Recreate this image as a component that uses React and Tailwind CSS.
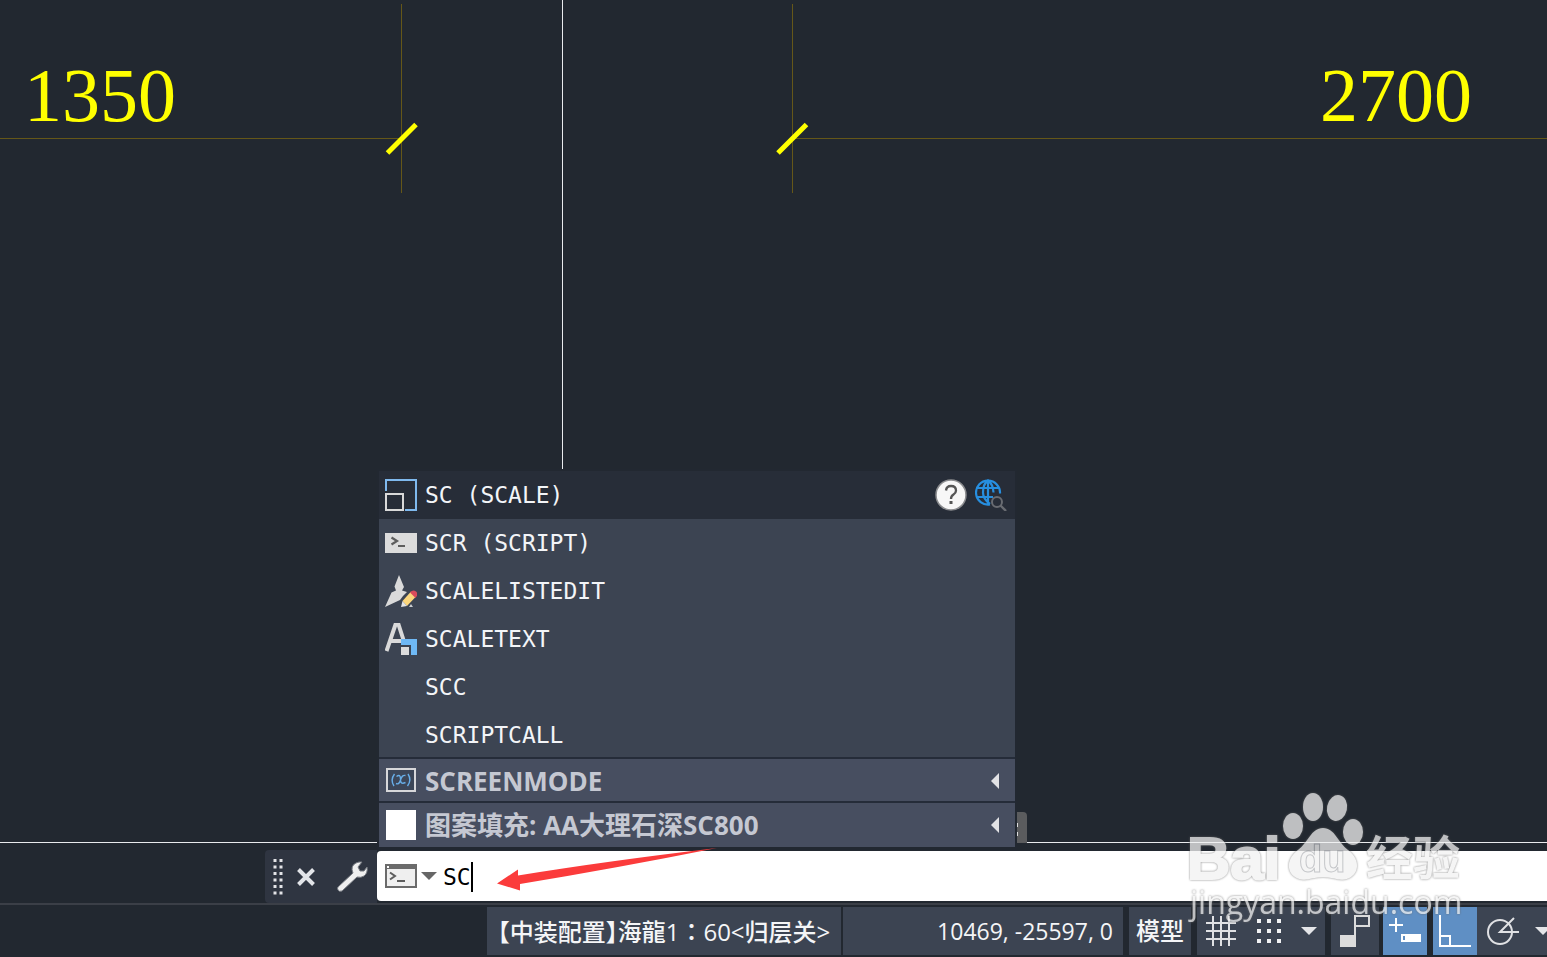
import React, { useState } from "react";

function ScaleIcon() {
  return (
    <svg width="32" height="32" viewBox="0 0 32 32" fill="none" strokeWidth="2">
      <path d="M1 12V1H31V31H20" stroke="#7fb9ee" />
      <rect x="1" y="15" width="17" height="16" stroke="#d9d9d9" />
    </svg>
  );
}

function ScriptIcon() {
  return (
    <svg width="32" height="32" viewBox="0 0 32 32" fill="none">
      <rect y="6" width="32" height="20" fill="#dcdcdc" />
      <path d="M6.500 10.500L12 14L6.500 17.500" stroke="#5d5d5d" strokeWidth="2.200" />
      <path d="M13 19H20" stroke="#5d5d5d" strokeWidth="2" />
    </svg>
  );
}

function ScaleListIcon() {
  return (
    <svg width="32" height="32" viewBox="0 0 32 32" fill="none">
      <path d="M14 0L9.500 11.500L11 15.500L6.500 17.500L0 32L15 25L18 21L22 17L17 15.500L19 12Z" fill="#dadada" />
      <path d="M17.500 26L26 16.500L31 21.500L22 31Z" fill="#fbd67c" />
      <path d="M25 17.500Q28 14 31 16.500Q34 19 30.500 23Z" fill="#d94c5c" />
      <path d="M17.500 26L22 31L16 32Z" fill="#e4e4e4" />
      <path d="M26 29L28 32H24Z" fill="#c9ccd0" />
    </svg>
  );
}

function ScaleTextIcon() {
  return (
    <svg width="32" height="32" viewBox="0 0 32 32" fill="none">
      <path d="M1.500 28L10.500 1.500H13.500L18.500 17M5.500 18H17" stroke="#dadada" strokeWidth="4" />
      <path d="M16 16H32V32H26V22H16Z" fill="#6fb9f5" />
      <rect x="16" y="24" width="8" height="8" fill="#dcdcdc" />
    </svg>
  );
}

function VariableIcon() {
  return (
    <svg width="32" height="32" viewBox="0 0 32 32" fill="none">
      <rect x="2" y="4" width="28" height="22" fill="#3c4658" stroke="#d7d7da" strokeWidth="2" />
      <g stroke="#68aee8" strokeWidth="1.400">
        <path d="M9.500 9Q5 15 9 21M23 9Q27 15 22.500 21" />
        <path d="M11.500 11.500Q15.500 8.500 15.500 14Q15 20 20.500 17.500M20.500 10.500Q17 9.500 15.500 15Q14 20 11 18.500" />
      </g>
    </svg>
  );
}

function HelpIcon() {
  return (
    <svg width="32" height="32" viewBox="0 0 32 32" fill="none">
      <circle cx="16" cy="16" r="15" fill="#f7f7f7" stroke="#8b8c8f" strokeWidth="1.500" />
      <path d="M11 11.500Q11.500 7 16 7Q21 7 21 11.500Q21 14 18.500 15.500Q16 17 16 20" stroke="#555" strokeWidth="2.300" />
      <rect x="14.500" y="22" width="3" height="3" fill="#555" />
    </svg>
  );
}

function GlobeSearchIcon() {
  return (
    <svg width="32" height="32" viewBox="0 0 32 32" fill="none">
      <g stroke="#278fe0" strokeWidth="2.200">
        <path d="M15 25.500A12 12 0 1 1 25 14.500" />
        <path d="M15 25Q8 20 8 13.500Q8 5 13 1.500Q18 5 18.500 13.500M13 1V26M2 9H24M1 18H18" />
      </g>
      <circle cx="22" cy="23" r="5" stroke="#696c72" strokeWidth="2" fill="#272d38" />
      <path d="M25.500 26.500L31 32" stroke="#696c72" strokeWidth="2.400" />
    </svg>
  );
}

const commands = [
  { name: "SC (SCALE)", Icon: ScaleIcon, selected: true },
  { name: "SCR (SCRIPT)", Icon: ScriptIcon },
  { name: "SCALELISTEDIT", Icon: ScaleListIcon },
  { name: "SCALETEXT", Icon: ScaleTextIcon },
  { name: "SCC" },
  { name: "SCRIPTCALL" },
];

function CommandRow({ name, Icon, selected }) {
  return (
    <li className={selected ? "flex h-12 items-center bg-[#272d38] pr-2" : "flex h-12 items-center bg-[#3c4452] pr-2"}>
      <button className="flex h-full flex-1 items-center gap-2 pl-1.5 text-left">
        <span className="size-8">{Icon && <Icon />}</span>
        <span className="whitespace-pre">{name}</span>
      </button>
      {selected && (
        <span className="flex gap-2">
          <button aria-label="Help"><HelpIcon /></button>
          <button aria-label="Search online"><GlobeSearchIcon /></button>
        </span>
      )}
    </li>
  );
}

function CategoryRow({ children, icon }) {
  return (
    <button className="flex h-11 w-full items-center gap-2 bg-[#474e60] pr-4 pl-1.5 text-left font-['Open_Sans','Noto_Sans_CJK_SC',sans-serif] text-[26px] leading-8 font-bold text-[#c5c8d2]">
      <span className="flex size-8 items-center justify-center">{icon}</span>
      <span className="flex-1 whitespace-nowrap">{children}</span>
      <svg width="8" height="16" viewBox="0 0 8 16"><path d="M8 0V16L0 8Z" fill="#e2e2e5" /></svg>
    </button>
  );
}

function Suggestions() {
  return (
    <section aria-label="Suggestions" className="absolute bottom-0 left-[377px] w-[640px] border-2 border-b-[3px] border-[#222831] font-['DejaVu_Sans_Mono',monospace] text-[23px] text-[#f3f5f8]">
      <ul className="h-[288px] overflow-hidden border-b-2 border-[#252c39]">
        {commands.map((c) => <CommandRow key={c.name} {...c} />)}
      </ul>
      <div className="h-11 overflow-hidden border-b-2 border-[#252c39]">
        <CategoryRow icon={<VariableIcon />}>SCREENMODE</CategoryRow>
      </div>
      <CategoryRow icon={<span className="size-[30px] bg-white" />}>图案填充: AA大理石深SC800</CategoryRow>
    </section>
  );
}

function Drawing() {
  return (
    <svg className="absolute inset-0 size-full" fill="none">
      <g stroke="#655718" strokeWidth="1">
        <path d="M0 138.500H402M401.500 4V193M792.500 4V193" />
        <path d="M793 138.500H4000" />
      </g>
      <path d="M387.500 153L416 124.500M778 153L806.500 124.500" stroke="#ffff00" strokeWidth="5" />
      <path d="M562.500 0V842M0 842.500H4000" stroke="#e9ebee" strokeWidth="1" />
      <g fill="#ffff00" className="font-['Liberation_Serif',serif] text-[76px]">
        <text x="24" y="121">1350</text>
        <text x="1320" y="121">2700</text>
      </g>
      <path d="M1017 812H1023Q1027 812 1027 816V843H1017Z" fill="#5b5c5e" />
      <path d="M1017 823h1v4h-1zM1017 832h1v4h-1z" fill="#ddd" />
    </svg>
  );
}

function CommandLine() {
  const [value, setValue] = useState("SC");
  return (
    <div className="relative flex h-[53px] items-stretch pl-[265px]">
      <div className="flex w-28 items-center rounded-l bg-[#2f3541]">
        <svg width="12" height="36" viewBox="0 0 12 36" className="ml-2" aria-hidden="true">
          <path d="M2 0V36M8 0V36" stroke="#e3e4e7" strokeWidth="3" strokeDasharray="3 3.500" />
        </svg>
        <button aria-label="Close" className="ml-3">
          <svg width="18" height="18" viewBox="0 0 18 18"><path d="M1.500 1.500L16.500 16.500M16.500 1.500L1.500 16.500" stroke="#e2e4e8" strokeWidth="4" /></svg>
        </button>
        <button aria-label="Customize" className="ml-5">
          <svg width="34" height="34" viewBox="0 0 34 34">
            <path d="M3 27L18 13Q15 6 21 3Q24 1.500 27 2L23 7L25 11L29 11L32 7Q33 13 29 16Q26 18 22 17L7 31Q4 32 3 30Q2 28 3 27Z" fill="#efefef" stroke="#777b82" strokeWidth="1" />
          </svg>
        </button>
      </div>
      <div className="my-px mb-0.5 flex flex-1 items-center rounded-l bg-white pl-2">
        <button aria-label="Recent commands" className="flex items-center gap-1">
          <svg width="32" height="24" viewBox="0 0 32 24" fill="none">
            <rect x="1" y="1" width="30" height="22" fill="#efefef" stroke="#6b6b6b" strokeWidth="2" />
            <path d="M0 0H32V5H0Z" fill="#6b6b6b" />
            <path d="M2 2h2v2h-2z" fill="#fff" />
            <path d="M5 8.500L10 12L5 15.500M12 17H20" stroke="#5d5d5d" strokeWidth="2" />
          </svg>
          <svg width="16" height="8" viewBox="0 0 16 8"><path d="M0 0H16L8 8Z" fill="#666" /></svg>
        </button>
        <div className="relative ml-1.5 flex-1 pt-0.5">
          <input
            aria-label="Command"
            value={value}
            onChange={(e) => setValue(e.target.value)}
            className="w-full bg-transparent font-['DejaVu_Sans_Mono',monospace] text-[23px] text-black outline-none"
          />
          <span className="absolute top-1 left-7 h-[30px] w-0.5 bg-black" />
        </div>
      </div>
      <svg className="pointer-events-none absolute -top-1 left-[497px]" width="220" height="46" viewBox="0 0 220 46">
        <path d="M0 37.500L21 23.500V29.500Q110 15 220 2Q120 22 23 38V44.500Z" fill="#fb3b3b" />
      </svg>
    </div>
  );
}

const iconCell = "flex h-12 items-center justify-center";

function StatusBar() {
  return (
    <footer className="flex h-[54px] items-start justify-end overflow-hidden border-t-2 border-[#3b3f47] pt-0.5 font-['Open_Sans','Noto_Sans_CJK_SC',sans-serif] text-[23px] font-medium whitespace-nowrap text-[#f4f5f7]">
      <button className="mr-0.5 flex h-12 w-[354px] items-center justify-center bg-[#3c4452] text-2xl">
        <span>
          <span className="[font-feature-settings:'halt']">【中装配置】</span>海龍1<span className="font-['Noto_Sans_CJK_TC',sans-serif]">：</span>60&lt;归层关&gt;
        </span>
      </button>
      <button className="mr-1.5 flex h-12 w-[280px] items-center justify-end bg-[#3c4452] pr-2.5">10469, -25597, 0</button>
      <button className="mr-1.5 flex h-12 w-[62px] items-center justify-center bg-[#3c4452] text-2xl">模型</button>
      <div className="mr-1.5 flex h-12 w-32 items-center bg-[#3c4452] pl-2">
        <button aria-label="Grid">
          <svg width="32" height="32" viewBox="0 0 32 32"><path d="M8 1V31M16 1V31M24 1V31M1 8H31M1 16H31M1 24H31" stroke="#e0e1e4" strokeWidth="2" /></svg>
        </button>
        <button aria-label="Snap" className="ml-4">
          <svg width="32" height="32" viewBox="0 0 32 32"><path d="M4 6H28M4 16H28M4 26H28" stroke="#f0f1f3" strokeWidth="4" strokeDasharray="4 6" /></svg>
        </button>
        <button aria-label="Snap options" className="ml-4">
          <svg width="16" height="8" viewBox="0 0 16 8"><path d="M0 0H16L8 8Z" fill="#e4e5e8" /></svg>
        </button>
      </div>
      <button aria-label="Infer constraints" className={`${iconCell} mr-1 w-12 bg-[#3c4452]`}>
        <svg width="32" height="32" viewBox="0 0 32 32" fill="none"><rect x="1" y="20" width="16" height="12" fill="#dcdcdc" /><path d="M16 20V1H30V11H16" stroke="#dcdcdc" strokeWidth="2" /></svg>
      </button>
      <button aria-label="Dynamic input" className={`${iconCell} mr-1.5 w-11 bg-[#5f8fc4]`}>
        <svg width="32" height="32" viewBox="0 0 32 32" fill="none"><path d="M7 3V17M0 10H14" stroke="#fff" strokeWidth="2" /><rect x="12" y="19" width="20" height="8" fill="#fff" /><path d="M14 21h2v4h-2z" fill="#5f8fc4" /></svg>
      </button>
      <button aria-label="Ortho mode" className={`${iconCell} w-11 bg-[#5f8fc4]`}>
        <svg width="32" height="32" viewBox="0 0 32 32" fill="none"><path d="M1 0V31H32M1 21H11V31" stroke="#fff" strokeWidth="2" /></svg>
      </button>
      <div className="flex h-12 w-[70px] items-center overflow-hidden bg-[#3c4452] pl-2.5">
        <button aria-label="Polar tracking" className="shrink-0">
          <svg width="32" height="32" viewBox="0 0 32 32" fill="none" stroke="#e0e1e4" strokeWidth="2"><circle cx="13" cy="17" r="12" /><path d="M27 3L13 17H32" /></svg>
        </button>
        <button aria-label="Polar options" className="ml-4 shrink-0">
          <svg width="16" height="8" viewBox="0 0 16 8"><path d="M0 0H16L8 8Z" fill="#e4e5e8" /></svg>
        </button>
      </div>
    </footer>
  );
}

function Watermark() {
  return (
    <svg className="pointer-events-none absolute right-[77px] bottom-[31px] opacity-75 drop-shadow-[0_0_1px_#666666]" width="290" height="140" viewBox="1180 786 290 140" fill="#f2f2f2">
      <g className="font-['Liberation_Sans','Noto_Sans_CJK_SC',sans-serif] font-bold">
        <text x="1187" y="879" className="text-[60px]" stroke="#f2f2f2" strokeWidth="2">Bai</text>
        <text x="1366" y="875" className="text-[47px]">经验</text>
      </g>
      <ellipse cx="1293" cy="826" rx="10" ry="13" />
      <ellipse cx="1313" cy="807" rx="10" ry="14" />
      <ellipse cx="1337" cy="808" rx="10" ry="13" transform="rotate(12 1337 808)" />
      <ellipse cx="1353" cy="832" rx="10" ry="13" />
      <path d="M1323 828C1335 828 1338 843 1348 850C1359 858 1360 871 1351 877C1342 883 1334 877 1323 877C1312 877 1304 883 1295 877C1286 871 1287 858 1298 850C1308 843 1311 828 1323 828Z" />
      <text x="1299" y="872" className="font-['Liberation_Sans',sans-serif] text-[38px] font-bold" stroke="#b3b5b9" strokeWidth="1">du</text>
      <text x="1190" y="914" className="font-['Open_Sans',sans-serif] text-[32px] font-medium">jingyan.baidu.com</text>
    </svg>
  );
}

export default function App() {
  return (
    <div className="relative flex min-h-screen flex-col overflow-hidden bg-[#222830]">
      <main className="relative min-h-[480px] flex-1">
        <Drawing />
        <Suggestions />
      </main>
      <CommandLine />
      <StatusBar />
      <Watermark />
    </div>
  );
}
